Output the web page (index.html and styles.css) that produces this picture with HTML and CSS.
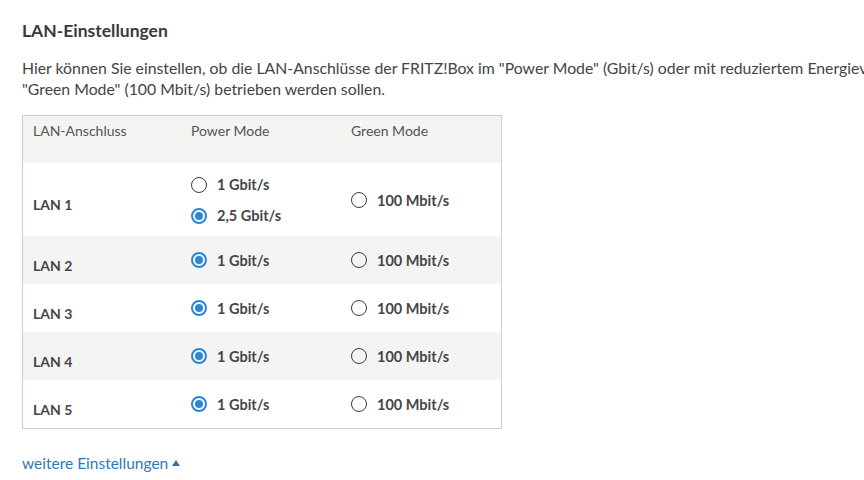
FILE: index.html
```html
<!DOCTYPE html>
<html lang="de">
<head>
<meta charset="utf-8">
<title>LAN-Einstellungen</title>
<link rel="stylesheet" href="styles.css">
</head>
<body>
<div class="page">
  <h2 class="title">LAN-Einstellungen</h2>
  <p class="intro">Hier können Sie einstellen, ob die LAN-Anschlüsse der FRITZ!Box im "Power Mode" (Gbit/s) oder mit reduziertem Energieverbrauch im<br>"Green Mode" (100 Mbit/s) betrieben werden sollen.</p>
  <div class="table">
    <div class="row head">
      <div class="cell">LAN-Anschluss</div>
      <div class="cell">Power Mode</div>
      <div class="cell">Green Mode</div>
    </div>
    <div class="row first">
      <div class="cell label">LAN 1</div>
      <div class="cell opts">
        <label class="opt"><span class="radio"></span>1 Gbit/s</label>
        <label class="opt"><span class="radio on"></span>2,5 Gbit/s</label>
      </div>
      <div class="cell opts">
        <label class="opt"><span class="radio"></span>100 Mbit/s</label>
      </div>
    </div>
    <div class="row alt">
      <div class="cell label">LAN 2</div>
      <div class="cell opts"><label class="opt"><span class="radio on"></span>1 Gbit/s</label></div>
      <div class="cell opts"><label class="opt"><span class="radio"></span>100 Mbit/s</label></div>
    </div>
    <div class="row">
      <div class="cell label">LAN 3</div>
      <div class="cell opts"><label class="opt"><span class="radio on"></span>1 Gbit/s</label></div>
      <div class="cell opts"><label class="opt"><span class="radio"></span>100 Mbit/s</label></div>
    </div>
    <div class="row alt">
      <div class="cell label">LAN 4</div>
      <div class="cell opts"><label class="opt"><span class="radio on"></span>1 Gbit/s</label></div>
      <div class="cell opts"><label class="opt"><span class="radio"></span>100 Mbit/s</label></div>
    </div>
    <div class="row">
      <div class="cell label">LAN 5</div>
      <div class="cell opts"><label class="opt"><span class="radio on"></span>1 Gbit/s</label></div>
      <div class="cell opts"><label class="opt"><span class="radio"></span>100 Mbit/s</label></div>
    </div>
  </div>
  <a class="more" href="#">weitere Einstellungen <span class="tri"></span></a>
</div>
</body>
</html>
```
FILE: styles.css
```css
html, body {
  margin: 0;
  padding: 0;
  background: #fff;
}
body {
  font-family: "Source Sans Pro", Lato, "Noto Sans", sans-serif;
  color: #3f3f3f;
  overflow: hidden;
}
.page {
  padding: 20px 0 0 22px;
  width: 1100px;
}
.title {
  margin: 0;
  font-size: 17.5px;
  font-weight: 700;
  line-height: 22px;
  color: #3a3a3a;
}
.intro {
  margin: 15px 0 0;
  font-size: 15.8px;
  line-height: 21px;
  white-space: nowrap;
  color: #444;
}
.table {
  margin-top: 16px;
  width: 478px;
  border: 1px solid #c6cfd5;
}
.row {
  display: grid;
  grid-template-columns: 168px 160px 1fr;
  align-items: center;
  min-height: 48px;
}
.row.alt, .row.head {
  background: #f4f4f2;
}
.row.head {
  align-items: start;
  height: 47px;
  min-height: 0;
  font-size: 14px;
  color: #555;
}
.head .cell {
  padding-top: 6px;
}
.cell:first-child {
  padding-left: 10px;
}
.label {
  font-size: 14px;
  font-weight: 700;
  color: #454545;
  padding-top: 10px;
}
.opts {
  display: flex;
  flex-direction: column;
}
.first .opts {
  padding: 6px 0 5px;
}
.opt {
  display: flex;
  align-items: center;
  height: 31px;
  font-size: 14.5px;
  font-weight: 700;
  color: #454545;
}
.radio {
  box-sizing: border-box;
  width: 16px;
  height: 16px;
  border-radius: 50%;
  border: 1.5px solid #3a3a3a;
  margin: 0 10px 0 0;
  flex: none;
  position: relative;
}
.radio.on {
  border: 2px solid #2b86d8;
}
.radio.on::after {
  content: "";
  position: absolute;
  left: 2px;
  top: 2px;
  width: 8px;
  height: 8px;
  border-radius: 50%;
  background: #2b86d8;
}
.more {
  display: inline-flex;
  align-items: center;
  margin-top: 25px;
  font-size: 15.5px;
  color: #3177bb;
  text-decoration: none;
  gap: 4px;
}
.tri {
  width: 0;
  height: 0;
  border-left: 4.5px solid transparent;
  border-right: 4.5px solid transparent;
  border-bottom: 6px solid #3a6ea8;
}
```
